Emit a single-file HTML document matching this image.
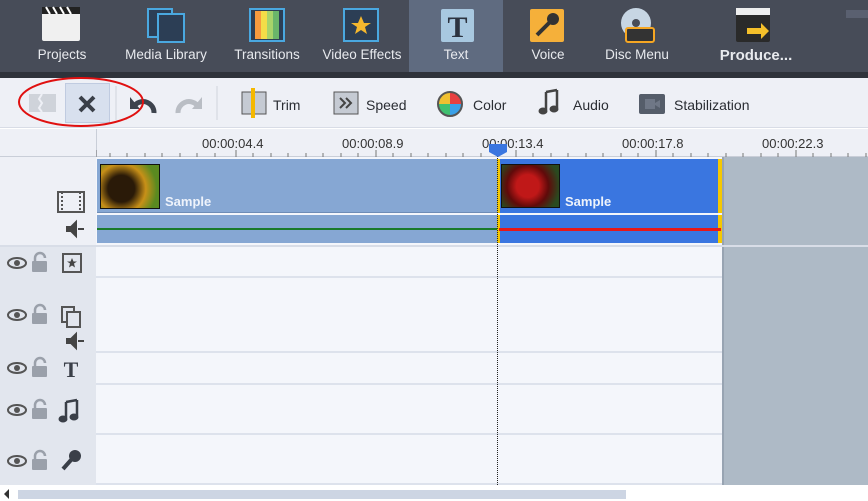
<!DOCTYPE html><html><head><style>
*{margin:0;padding:0;box-sizing:border-box}
body{width:868px;height:501px;overflow:hidden;background:#fff;font-family:"Liberation Sans",sans-serif;position:relative}
.a{position:absolute}
.top{left:0;top:0;width:868px;height:72px;background:#474c58}
.topb{left:0;top:72px;width:868px;height:6px;background:#2f333b}
.tab{top:0;height:72px;text-align:center;color:#e8eaee;font-size:13.5px}
.tab span{position:absolute;left:0;right:0;top:47px}
.tb{top:78px;left:0;width:868px;height:50px;background:#eef0f6;border-bottom:1px solid #d8dce6}
.tl{font-size:14px;color:#2a2d33;top:97px}
.ruler{top:129px;left:0;width:868px;height:28px;background:#eef0f6;border-bottom:1px solid #c9ced8}
.rt{font-size:13px;color:#333;top:136px}
.hdr{left:0;width:96px;background:#e2e6ee}
.row{left:96px;width:626px;background:#f4f6fb;border-bottom:2px solid #dde2ec}
</style></head><body>
<div class="a top"></div><div class="a topb"></div>
<div class="a" style="left:409px;top:0;width:94px;height:72px;background:#5f6b80"></div>
<svg class="a" style="left:0;top:0" width="868" height="48">
<rect x="42" y="12" width="38" height="29" rx="2" fill="#f0f0f0"/><rect x="42" y="7" width="38" height="7" fill="#222"/><path d="M46 7l4 7M53 7l4 7M60 7l4 7M67 7l4 7" stroke="#fff" stroke-width="2"/>
<rect x="148" y="9" width="24" height="28" fill="#2c3e55" stroke="#4aa8e0" stroke-width="2"/><rect x="158" y="14" width="26" height="28" fill="#2c3e55" stroke="#4aa8e0" stroke-width="2"/>
<rect x="250" y="9" width="34" height="32" fill="#2c3e55" stroke="#4aa8e0" stroke-width="2"/><rect x="255" y="11" width="6" height="28" fill="#f79a3e"/><rect x="261" y="11" width="6" height="28" fill="#f3dd48"/><rect x="267" y="11" width="6" height="28" fill="#a7d36a"/><rect x="273" y="11" width="6" height="28" fill="#6ab56a"/>
<rect x="344" y="9" width="34" height="32" fill="#2c3e55" stroke="#4aa8e0" stroke-width="2"/><path d="M361 16l3 7 7 0-6 4 2 7-6-4-6 4 2-7-6-4 7 0z" fill="#f5b82e"/>
<rect x="441" y="9" width="33" height="33" rx="2" fill="#a8c8e0"/><text x="457.5" y="37" text-anchor="middle" font-family="Liberation Serif" font-weight="bold" font-size="30" fill="#2c3340">T</text>
<rect x="530" y="9" width="34" height="33" rx="2" fill="#f5b03a"/><circle cx="553" cy="19" r="6" fill="#333"/><path d="M549 23l-12 12" stroke="#333" stroke-width="4"/>
<circle cx="636" cy="23" r="15" fill="#c7d6e4"/><circle cx="636" cy="23" r="4" fill="#474c58"/><rect x="626" y="28" width="28" height="14" rx="2" fill="#333" stroke="#f5a623" stroke-width="2"/>
<rect x="736" y="8" width="34" height="34" rx="2" fill="#2a2a2a"/><rect x="736" y="8" width="34" height="7" fill="#eee"/><path d="M747 28h14v-5l8 8-8 8v-5h-14z" fill="#f5c02a"/>
</svg>
<div class="a tab" style="left:22px;width:80px"><span>Projects</span></div>
<div class="a tab" style="left:116px;width:100px"><span>Media Library</span></div>
<div class="a tab" style="left:222px;width:90px"><span>Transitions</span></div>
<div class="a tab" style="left:317px;width:90px"><span>Video Effects</span></div>
<div class="a tab" style="left:409px;width:94px"><span>Text</span></div>
<div class="a tab" style="left:510px;width:76px"><span>Voice</span></div>
<div class="a tab" style="left:592px;width:90px"><span>Disc Menu</span></div>
<div class="a tab" style="left:700px;width:112px;font-weight:bold;font-size:15px"><span>Produce...</span></div>
<div class="a" style="left:846px;top:10px;width:22px;height:8px;background:#5a6070"></div>
<div class="a tb"></div>
<div class="a" style="left:65px;top:83px;width:45px;height:40px;background:#d8e0ee;border:1px solid #c0cbe0"></div>
<svg class="a" style="left:0;top:78px" width="868" height="50">
<rect x="29" y="16" width="27" height="18" fill="#cfd3da"/><path d="M42 16l-3 5 3 4-3 5 3 4" stroke="#eef0f6" stroke-width="2" fill="none"/>
<path d="M80 19l14 14M94 19l-14 14" stroke="#3a3f48" stroke-width="4"/>
<line x1="116" y1="8" x2="116" y2="42" stroke="#d0d4dc"/>
<path d="M154 35a11 11 0 0 0-19-8" stroke="#3d434d" stroke-width="5" fill="none"/><path d="M130 19v12h10z" fill="#3d434d"/>
<path d="M178 35a11 11 0 0 1 19-8" stroke="#b9bdc4" stroke-width="5" fill="none"/><path d="M202 19v12h-10z" fill="#b9bdc4"/>
<line x1="217" y1="8" x2="217" y2="42" stroke="#d0d4dc"/>
<rect x="242" y="14" width="24" height="22" fill="#c5cad3" stroke="#555"/><rect x="251" y="10" width="4" height="30" fill="#f5b800"/>
<rect x="334" y="14" width="24" height="22" fill="#c5cad3" stroke="#555"/><path d="M340 20l5 5-5 5M346 20l5 5-5 5" stroke="#444" stroke-width="2" fill="none"/>
<circle cx="450" cy="26" r="12" fill="#f0c030"/><path d="M450 26L450 14A12 12 0 0 1 462 26z" fill="#e84040"/><path d="M450 26L462 26A12 12 0 0 1 450 38z" fill="#3aa0e8"/><path d="M450 26L450 38A12 12 0 0 1 438 26z" fill="#40c070"/><circle cx="450" cy="26" r="12" fill="none" stroke="#555" stroke-width="2"/>
<g fill="#444" stroke="#444"><path d="M546 14v18M557 12v18M546 14l11-2" stroke-width="2.5" fill="none"/><ellipse cx="543" cy="33" rx="4" ry="3"/><ellipse cx="554" cy="31" rx="4" ry="3"/></g>
<rect x="639" y="16" width="26" height="20" rx="2" fill="#555d6a"/><path d="M645 21h10v10h-10zM655 25l5-3v8l-5-3z" fill="#6f7786"/>
</svg>
<div class="a tl" style="left:273px">Trim</div>
<div class="a tl" style="left:366px">Speed</div>
<div class="a tl" style="left:473px">Color</div>
<div class="a tl" style="left:573px">Audio</div>
<div class="a tl" style="left:674px">Stabilization</div>
<svg class="a" style="left:16px;top:76px" width="140" height="52"><ellipse cx="65" cy="26" rx="62" ry="24" fill="none" stroke="#e01010" stroke-width="2"/></svg>
<div class="a ruler"></div>
<div class="a" style="left:96px;top:129px;width:1px;height:28px;background:#c9ced8"></div>
<svg class="a" style="left:96px;top:150px" width="772" height="7"><path d="M0 7V0" stroke="#777"/>
<g stroke="#777">
<line x1="14" y1="3" x2="14" y2="7"/><line x1="31" y1="3" x2="31" y2="7"/><line x1="49" y1="3" x2="49" y2="7"/><line x1="66" y1="3" x2="66" y2="7"/><line x1="84" y1="3" x2="84" y2="7"/><line x1="101" y1="3" x2="101" y2="7"/><line x1="119" y1="3" x2="119" y2="7"/><line x1="140" y1="0" x2="140" y2="7"/><line x1="157" y1="3" x2="157" y2="7"/><line x1="175" y1="3" x2="175" y2="7"/><line x1="192" y1="3" x2="192" y2="7"/><line x1="210" y1="3" x2="210" y2="7"/><line x1="227" y1="3" x2="227" y2="7"/><line x1="245" y1="3" x2="245" y2="7"/><line x1="262" y1="3" x2="262" y2="7"/><line x1="280" y1="0" x2="280" y2="7"/><line x1="297" y1="3" x2="297" y2="7"/><line x1="315" y1="3" x2="315" y2="7"/><line x1="332" y1="3" x2="332" y2="7"/><line x1="350" y1="3" x2="350" y2="7"/><line x1="367" y1="3" x2="367" y2="7"/><line x1="385" y1="3" x2="385" y2="7"/><line x1="402" y1="3" x2="402" y2="7"/><line x1="420" y1="0" x2="420" y2="7"/><line x1="437" y1="3" x2="437" y2="7"/><line x1="455" y1="3" x2="455" y2="7"/><line x1="472" y1="3" x2="472" y2="7"/><line x1="490" y1="3" x2="490" y2="7"/><line x1="507" y1="3" x2="507" y2="7"/><line x1="525" y1="3" x2="525" y2="7"/><line x1="542" y1="3" x2="542" y2="7"/><line x1="560" y1="0" x2="560" y2="7"/><line x1="577" y1="3" x2="577" y2="7"/><line x1="595" y1="3" x2="595" y2="7"/><line x1="612" y1="3" x2="612" y2="7"/><line x1="630" y1="3" x2="630" y2="7"/><line x1="647" y1="3" x2="647" y2="7"/><line x1="665" y1="3" x2="665" y2="7"/><line x1="682" y1="3" x2="682" y2="7"/><line x1="700" y1="0" x2="700" y2="7"/><line x1="717" y1="3" x2="717" y2="7"/><line x1="735" y1="3" x2="735" y2="7"/><line x1="752" y1="3" x2="752" y2="7"/><line x1="770" y1="3" x2="770" y2="7"/></g></svg>
<div class="a rt" style="left:202px">00:00:04.4</div>
<div class="a rt" style="left:342px">00:00:08.9</div>
<div class="a rt" style="left:482px">00:00:13.4</div>
<div class="a rt" style="left:622px">00:00:17.8</div>
<div class="a rt" style="left:762px">00:00:22.3</div>
<div class="a hdr" style="top:157px;height:88px;background:#eef0f6"></div>
<div class="a hdr" style="top:245px;height:240px"></div>
<div class="a" style="left:96px;top:157px;width:626px;height:88px;background:#f4f6fb"></div>
<div class="a row" style="top:245px;height:33px"></div>
<div class="a row" style="top:278px;height:75px"></div>
<div class="a row" style="top:353px;height:32px"></div>
<div class="a row" style="top:385px;height:50px"></div>
<div class="a row" style="top:435px;height:50px"></div>
<div class="a" style="left:722px;top:157px;width:146px;height:328px;background:#aebac6;border-left:2px solid #98a4b2"></div>
<div class="a" style="left:0;top:245px;width:868px;height:2px;background:#d8dde7"></div>
<div class="a" style="left:97px;top:159px;width:400px;height:54px;background:#86a7d3;border-bottom:1px solid #6e8cb6"></div>
<div class="a" style="left:97px;top:215px;width:400px;height:28px;background:#86a7d3"></div>
<div class="a" style="left:97px;top:228px;width:400px;height:2px;background:#1a7a2a"></div>
<div class="a" style="left:100px;top:164px;width:60px;height:45px;background:radial-gradient(circle at 35% 55%,#2a1a08 30%,#c89018 55%,#5a8a20 80%);border:1px solid #111"></div>
<div class="a" style="left:165px;top:194px;color:#eef3fb;font-weight:bold;font-size:13px">Sample</div>
<div class="a" style="left:497px;top:159px;width:225px;height:54px;background:#3a76e0;border-left:3px solid #f5c800;border-right:4px solid #f5c800"></div>
<div class="a" style="left:497px;top:215px;width:225px;height:28px;background:#3a76e0;border-left:3px solid #f5c800;border-right:4px solid #f5c800"></div>
<div class="a" style="left:499px;top:228px;width:222px;height:3px;background:#e81818"></div>
<div class="a" style="left:501px;top:164px;width:59px;height:44px;background:radial-gradient(circle at 45% 50%,#c01818 30%,#600a0a 55%,#2a4a20 85%);border:1px solid #111"></div>
<div class="a" style="left:565px;top:194px;color:#eef3fb;font-weight:bold;font-size:13px">Sample</div>
<div class="a" style="left:497px;top:150px;width:0;height:335px;border-left:1px dotted #222"></div>
<svg class="a" style="left:488px;top:142px" width="20" height="16"><path d="M1 2h18v8l-9 5-9-5z" fill="#3a76e0"/></svg>
<svg class="a" style="left:0;top:157px" width="96" height="328">
<rect x="58" y="35" width="26" height="20" fill="none" stroke="#555" stroke-width="2"/><path d="M62 35v20M80 35v20" stroke="#555" stroke-width="2" stroke-dasharray="2 2"/>
<path d="M67 70h4l5-5v14l-5-5h-4z M78 72h6" fill="#444" stroke="#444" stroke-width="2"/>
<rect x="63" y="97" width="18" height="18" fill="none" stroke="#555" stroke-width="2"/><path d="M72 101l1.5 3.5 3.5 0-3 2 1 4-3-2-3 2 1-4-3-2 3.5 0z" fill="#444"/>
<rect x="62" y="150" width="12" height="15" fill="none" stroke="#555" stroke-width="2"/><rect x="67" y="155" width="13" height="15" fill="#e2e6ee" stroke="#555" stroke-width="2"/>
<path d="M67 182h4l5-5v14l-5-5h-4z M78 184h6" fill="#444" stroke="#444" stroke-width="2"/>
<text x="71" y="220" text-anchor="middle" font-family="Liberation Serif" font-weight="bold" font-size="22" fill="#3a3f48">T</text>
<g fill="#3a3f48" stroke="#3a3f48"><path d="M66 245v16M77 243v16M66 245l11-2" stroke-width="2.5" fill="none"/><ellipse cx="63" cy="262" rx="4" ry="3"/><ellipse cx="74" cy="260" rx="4" ry="3"/></g>
<circle cx="75" cy="299" r="6" fill="#3a3f48"/><path d="M71 303l-8 9" stroke="#3a3f48" stroke-width="4"/>
<g fill="#555"><ellipse cx="17" cy="106" rx="9" ry="5" fill="none" stroke="#555" stroke-width="2"/><circle cx="17" cy="106" r="3"/>
<ellipse cx="17" cy="158" rx="9" ry="5" fill="none" stroke="#555" stroke-width="2"/><circle cx="17" cy="158" r="3"/>
<ellipse cx="17" cy="211" rx="9" ry="5" fill="none" stroke="#555" stroke-width="2"/><circle cx="17" cy="211" r="3"/>
<ellipse cx="17" cy="253" rx="9" ry="5" fill="none" stroke="#555" stroke-width="2"/><circle cx="17" cy="253" r="3"/>
<ellipse cx="17" cy="304" rx="9" ry="5" fill="none" stroke="#555" stroke-width="2"/><circle cx="17" cy="304" r="3"/></g>
<g fill="#9aa0aa"><rect x="32" y="104" width="15" height="11" rx="1"/><rect x="32" y="156" width="15" height="11" rx="1"/><rect x="32" y="209" width="15" height="11" rx="1"/><rect x="32" y="251" width="15" height="11" rx="1"/><rect x="32" y="302" width="15" height="11" rx="1"/></g>
<g fill="none" stroke="#9aa0aa" stroke-width="2.5"><path d="M35 104v-3a5 5 0 0 1 10 0"/><path d="M35 156v-3a5 5 0 0 1 10 0"/><path d="M35 209v-3a5 5 0 0 1 10 0"/><path d="M35 251v-3a5 5 0 0 1 10 0"/><path d="M35 302v-3a5 5 0 0 1 10 0"/></g>
</svg>
<svg class="a" style="left:3px;top:488px" width="8" height="12"><path d="M6 1L1 6l5 5z" fill="#333"/></svg>
<div class="a" style="left:18px;top:490px;width:608px;height:9px;background:#cdd5e3"></div>
</body></html>
